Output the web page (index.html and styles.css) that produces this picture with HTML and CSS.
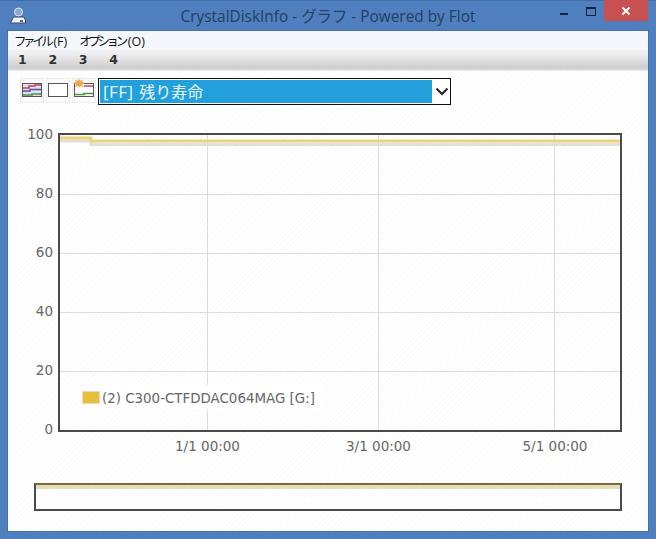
FILE: index.html
```html
<!DOCTYPE html>
<html lang="ja">
<head>
<meta charset="utf-8">
<title>CrystalDiskInfo - グラフ - Powered by Flot</title>
<link rel="stylesheet" href="styles.css">
</head>
<body>
<div class="window">
  <header class="titlebar">
    <svg class="app-icon" width="18" height="18" viewBox="0 0 18 18">
      <circle cx="9.500" cy="5" r="4" fill="#8ea8cc" stroke="#dfe8f4" stroke-width="1"/>
      <path d="M1.500 16 L4.500 10 H14.500 L16.500 13 V16 Z" fill="#eef2f8" stroke="#3c4c68" stroke-width="1"/>
      <path d="M11 14 h3" stroke="#334" stroke-width="1.500"/>
    </svg>
    <div class="title">CrystalDiskInfo - グラフ - Powered by Flot</div>
    <div class="controls">
      <span class="btn-min"></span>
      <span class="btn-max"></span>
      <span class="btn-close">
        <svg width="10" height="10" viewBox="0 0 10 10"><path d="M1.500 1.500 L8.500 8.500 M8.500 1.500 L1.500 8.500" stroke="#fff" stroke-width="2"/></svg>
      </span>
    </div>
  </header>
  <main class="client">
    <nav class="menubar">
      <span><span class="kana">ファイル</span>(F)</span>
      <span><span class="kana">オプション</span>(O)</span>
    </nav>
    <div class="numbar"><span>1</span><span>2</span><span>3</span><span>4</span></div>
    <section class="content">
      <div class="toolbar">
        <button class="tool">
          <svg width="20" height="14" viewBox="0 0 20 14">
            <rect x="0.500" y="0.500" width="19" height="13" fill="#dfe0ec" stroke="#555"/>
            <path d="M1 5 H7 V3 H13 V2 H19" fill="none" stroke="#c8405e" stroke-width="1.500"/>
            <path d="M1 8 H8 V6.500 H19" fill="none" stroke="#5050b0" stroke-width="1.500"/>
            <path d="M1 12 H10 V11 H19" fill="none" stroke="#50904a" stroke-width="1.500"/>
          </svg>
        </button>
        <button class="tool">
          <svg width="20" height="14" viewBox="0 0 20 14"><rect x="0.500" y="0.500" width="19" height="13" fill="#fff" stroke="#555"/></svg>
        </button>
        <button class="tool">
          <svg width="20" height="19" viewBox="0 0 20 19">
            <rect x="0.500" y="5.500" width="19" height="13" fill="#fff" stroke="#555"/>
            <path d="M10 8 H19" stroke="#c8405e" stroke-width="1.500"/>
            <path d="M1 16.500 H10 V15.500 H19" fill="none" stroke="#50904a" stroke-width="1.500"/>
            <path d="M5 0 L6 3 L9 1.500 L8 4 L11 5 L8 6.500 L9 9 L6 8 L5 10 L4 8 L1 9 L2 6.500 L0 5 L2 4 L1 1.500 L4 3 Z" fill="#f0a850"/>
          </svg>
        </button>
        <div class="select">
          <div class="select-value"><span class="select-code">[FF]</span> 残り寿命</div>
          <svg class="chevron" width="14" height="9" viewBox="0 0 14 9"><path d="M1.500 1.500 L7 7 L12.500 1.500" fill="none" stroke="#222" stroke-width="2"/></svg>
        </div>
      </div>
      <svg class="chart" width="640" height="410" viewBox="0 0 640 410">
        <g class="grid">
          <path d="M199.500 26 V323 M370.500 26 V323 M546.500 26 V323"/>
          <path d="M52 86.500 H613 M52 145.500 H613 M52 204.500 H613 M52 263.500 H613"/>
        </g>
        <path class="shadow" d="M52 33 H83 V36.500 H613"/>
        <path class="series" d="M52 30 H83 V33 H613"/>
        <rect class="frame" x="51" y="26" width="562" height="297"/>
        <g class="ylabels">
          <text x="45" y="31">100</text>
          <text x="45" y="90">80</text>
          <text x="45" y="149">60</text>
          <text x="45" y="208">40</text>
          <text x="45" y="267">20</text>
          <text x="45" y="326">0</text>
        </g>
        <g class="xlabels">
          <text x="199.500" y="343">1/1 00:00</text>
          <text x="370.500" y="343">3/1 00:00</text>
          <text x="547" y="343">5/1 00:00</text>
        </g>
        <rect class="legend-bg" x="70" y="277" width="245" height="25"/>
        <rect class="swatch" x="74.500" y="283.500" width="17" height="12"/>
        <text class="legend" x="94" y="295">(2) C300-CTFDDAC064MAG [G:]</text>
        <rect class="ov-fade" x="27" y="376" width="586" height="5"/>
        <rect class="frame" x="27" y="376" width="586" height="26"/>
        <path class="ov-series" d="M27 376 H613"/>
      </svg>
    </section>
  </main>
</div>
</body>
</html>
```
FILE: styles.css
```css
* { box-sizing: border-box; }
html, body { margin: 0; padding: 0; }
body { width: 656px; height: 539px; overflow: hidden; font-family: "Open Sans", "Noto Sans CJK JP", sans-serif; }
.window { width: 656px; height: 539px; background: #4f7fbe; display: flex; flex-direction: column; padding: 0 8px 8px; border-top: 1px solid #3f6da8; }
.titlebar { height: 30px; flex: none; display: flex; align-items: center; position: relative; margin: 0 -8px; padding-left: 9px; }
.app-icon { flex: none; margin-top: -1px; }
.title { position: absolute; left: 0; right: 0; top: 6px; text-align: center; font-size: 15.400px; line-height: 20px; color: #24405f; }
.controls { position: absolute; right: 8px; top: -1px; display: flex; align-items: flex-start; }
.btn-min { width: 8px; height: 2px; background: #14233c; margin: 13px 18px 0 0; }
.btn-max { width: 10px; height: 9px; border: 1px solid #14233c; border-top-width: 2px; margin: 7px 8px 0 0; }
.btn-close { width: 44px; height: 21px; background: #c75050; display: flex; align-items: center; justify-content: center; }
.client { flex: 1; min-height: 0; display: flex; flex-direction: column; background: #fff; box-shadow: 0 0 0 1px #4570aa; }
.menubar { height: 19px; flex: none; background: #f4f7fb; display: flex; gap: 12px; padding-left: 6px; font-size: 12.500px; line-height: 19px; color: #111; }
.kana { font: 12.500px/19px "Noto Sans CJK JP", sans-serif; letter-spacing: -3.400px; margin-right: 3px; }
.numbar { height: 21px; flex: none; display: flex; gap: 21.700px; padding-left: 10px; font: bold 12.500px/19px "DejaVu Sans", sans-serif; color: #333; background: linear-gradient(#f2f2f2 0, #ececec 25%, #cfcfcf 85%, #d8d8d8 100%); border-bottom: 1px solid #f0e8f0; }
.content { flex: 1; min-height: 0; background-color: #fff; background-image: repeating-linear-gradient(135deg, #fff 0 3px, #fafaf8 3px 4px); }
.toolbar { display: flex; align-items: flex-start; padding: 7px 0 0 12px; gap: 2px; }
.tool { width: 24px; height: 25px; padding: 0 0 5px; margin: 0; flex: none; border: 1px solid #ececec; background: #fbfbfb; display: flex; align-items: flex-end; justify-content: center; }
.select { width: 353px; height: 27px; border: 1px solid #111; background: #fff; display: flex; align-items: center; padding: 1px; }
.select-value { width: 333px; height: 23px; background: #22a0dc; color: #e8f6fc; font: 16px/23px "Noto Sans CJK JP", sans-serif; padding-left: 3px; }
.select-code { font: 17px/23px "Open Sans", sans-serif; letter-spacing: 0.500px; margin-right: 2px; }
.chevron { margin-left: 3px; }
.chart { display: block; margin-top: 3px; }
.grid path { fill: none; stroke: #dcdcdc; stroke-width: 1; }
.series { fill: none; stroke: #ecd27c; stroke-width: 3; }
.shadow { fill: none; stroke: #e2e0d4; stroke-width: 3; }
.frame { fill: none; stroke: #4a4a4a; stroke-width: 2; }
.ylabels text { text-anchor: end; font: 13.500px "DejaVu Sans", sans-serif; fill: #666; }
.xlabels text { text-anchor: middle; font: 13.500px "DejaVu Sans", sans-serif; fill: #666; }
.legend-bg { fill: #fff; fill-opacity: 0.900; }
.swatch { fill: #e8bf3c; stroke: #e2dcc0; stroke-width: 1; }
.legend { font: 13.400px "DejaVu Sans", sans-serif; fill: #666; }
.ov-fade { fill: #e6dcb8; }
.ov-series { stroke: #7a6c3a; stroke-width: 2; fill: none; }
```
